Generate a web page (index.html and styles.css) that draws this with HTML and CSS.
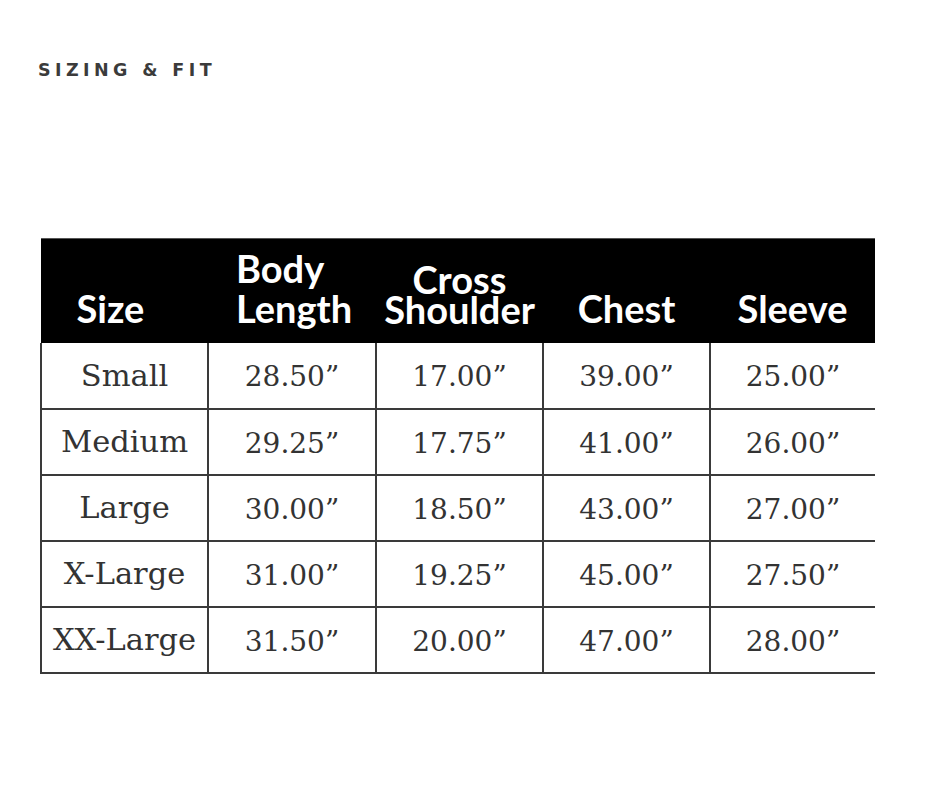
FILE: index.html
```html
<!DOCTYPE html>
<html lang="en">
<head>
<meta charset="utf-8">
<title>Sizing &amp; Fit</title>
<link rel="stylesheet" href="styles.css">
</head>
<body>
<main class="page">
  <h2 class="title">SIZING &amp; FIT</h2>
  <table class="chart">
    <colgroup>
      <col class="c1"><col class="c2"><col class="c3"><col class="c4"><col class="c5">
    </colgroup>
    <thead>
      <tr>
        <th class="h-size">Size</th>
        <th class="h-body">Body<br>Length</th>
        <th class="h-cross">Cross<br>Shoulder</th>
        <th>Chest</th>
        <th>Sleeve</th>
      </tr>
    </thead>
    <tbody>
      <tr><td>Small</td><td>28.50”</td><td>17.00”</td><td>39.00”</td><td>25.00”</td></tr>
      <tr><td>Medium</td><td>29.25”</td><td>17.75”</td><td>41.00”</td><td>26.00”</td></tr>
      <tr><td>Large</td><td>30.00”</td><td>18.50”</td><td>43.00”</td><td>27.00”</td></tr>
      <tr><td>X-Large</td><td>31.00”</td><td>19.25”</td><td>45.00”</td><td>27.50”</td></tr>
      <tr><td>XX-Large</td><td>31.50”</td><td>20.00”</td><td>47.00”</td><td>28.00”</td></tr>
    </tbody>
  </table>
</main>
</body>
</html>
```

FILE: styles.css
```css
html, body {
  margin: 0;
  padding: 0;
  background: #ffffff;
}

.page {
  padding: 60px 0 0 38px;
}

.title {
  margin: 0;
  font-family: "DejaVu Sans", sans-serif;
  font-weight: 700;
  font-size: 17.5px;
  line-height: 21px;
  letter-spacing: 4.4px;
  color: #3b3b3b;
}

.chart {
  margin: 157px 0 0 2px;
  width: 834px;
  table-layout: fixed;
  border-collapse: collapse;
}

.c1 { width: 167px; }
.c2 { width: 168px; }
.c3 { width: 167px; }
.c4 { width: 167px; }
.c5 { width: 165px; }

.chart thead th {
  background: #000;
  color: #fff;
  height: 104px;
  padding: 0 0 17px 0;
  box-sizing: border-box;
  vertical-align: bottom;
  font-family: Lato, "Open Sans", sans-serif;
  font-weight: 700;
  font-size: 38px;
  line-height: 36px;
  text-align: center;
  border-top: 1px solid #555;
}

.chart thead th.h-size {
  padding-right: 28px;
}

.chart thead th.h-body {
  line-height: 40px;
  text-align: left;
  padding-left: 28px;
  padding-bottom: 15px;
}

.chart thead th.h-cross {
  line-height: 30px;
  padding-bottom: 19px;
}

.chart tbody td {
  height: 66px;
  padding: 0;
  box-sizing: border-box;
  border: 2px solid #3a3a3a;
  border-right: none;
  font-family: "DejaVu Serif", serif;
  font-size: 30.5px;
  color: #333;
  text-align: center;
  vertical-align: middle;
}

.chart tbody td + td {
  border-left: 2px solid #3a3a3a;
}

.chart tbody td:not(:first-child) {
  font-size: 28px;
  padding-top: 3px;
}

.chart tbody tr:first-child td {
  border-top: none;
}
```
